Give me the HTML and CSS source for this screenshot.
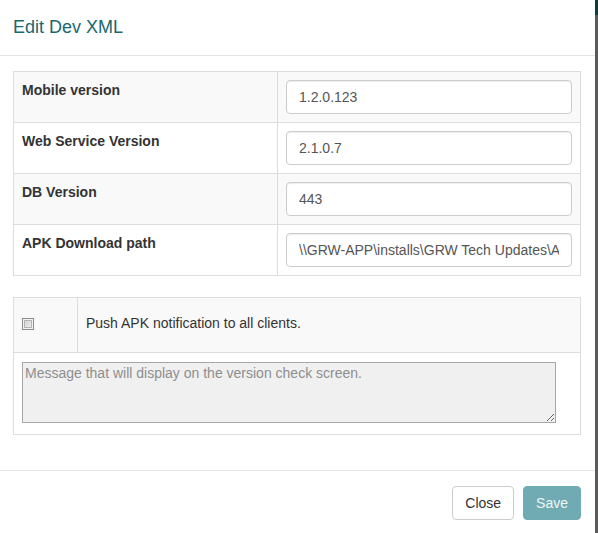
FILE: index.html
```html
<!DOCTYPE html>
<html lang="en">
<head>
    <meta charset="UTF-8">
    <meta name="viewport" content="width=device-width, initial-scale=1.0">
    <title>Edit Dev XML</title>
    <link rel="stylesheet" href="styles.css">
</head>
<body>
    <div class="modal">
        <div class="modal-header">
            <h4 class="modal-title">Edit Dev XML</h4>
        </div>

        <div class="modal-body">
            <table class="table versions">
                <colgroup>
                    <col class="label-col">
                    <col>
                </colgroup>
                <tr class="striped">
                    <td class="label">Mobile version</td>
                    <td><input class="form-control" type="text" value="1.2.0.123"></td>
                </tr>
                <tr>
                    <td class="label">Web Service Version</td>
                    <td><input class="form-control" type="text" value="2.1.0.7"></td>
                </tr>
                <tr class="striped">
                    <td class="label">DB Version</td>
                    <td><input class="form-control" type="text" value="443"></td>
                </tr>
                <tr>
                    <td class="label">APK Download path</td>
                    <td><input class="form-control" type="text" value="\\GRW-APP\installs\GRW Tech Updates\APK\GRW.apk"></td>
                </tr>
            </table>

            <table class="table push">
                <colgroup>
                    <col class="check-col">
                    <col>
                </colgroup>
                <tr class="striped push-row">
                    <td><input class="old-check" type="checkbox"></td>
                    <td>Push APK notification to all clients.</td>
                </tr>
                <tr>
                    <td colspan="2" class="message-cell">
                        <textarea class="message" placeholder="Message that will display on the version check screen."></textarea>
                    </td>
                </tr>
            </table>
        </div>

        <div class="modal-footer">
            <button class="btn btn-default">Close</button>
            <button class="btn btn-primary">Save</button>
        </div>
    </div>
</body>
</html>
```

FILE: styles.css
```css
* {
    margin: 0;
    padding: 0;
    box-sizing: border-box;
}

html, body {
    height: 100%;
}

body {
    font-family: "Liberation Sans", Arial, sans-serif;
    font-size: 14px;
    line-height: 20px;
    color: #333;
    background: linear-gradient(to bottom, #0e3b3c 0, #0e3b3c 15px, #5a5a5a 15px);
}

.modal {
    width: 595px;
    min-height: 100%;
    background: #fff;
}

.modal-header {
    padding: 17px 13px 18px;
    border-bottom: 1px solid #e5e5e5;
}

.modal-title {
    font-size: 18px;
    font-weight: normal;
    line-height: 20px;
    color: #19686f;
}

.modal-body {
    padding: 15px 14px 15px 13px;
}

.table {
    width: 100%;
    border-collapse: collapse;
    table-layout: fixed;
    margin-bottom: 21px;
}

.table td {
    border: 1px solid #ddd;
    padding: 8px;
    vertical-align: top;
}

.table .striped td {
    background: #f9f9f9;
}

.label-col {
    width: 264px;
}

.label {
    font-weight: bold;
}

.form-control {
    display: block;
    width: 100%;
    height: 34px;
    padding: 6px 12px;
    font-family: inherit;
    font-size: 14px;
    color: #555;
    background: #fff;
    border: 1px solid #ccc;
    border-radius: 4px;
    box-shadow: inset 0 1px 1px rgba(0, 0, 0, 0.075);
}

.push {
    margin-bottom: 20px;
}

.check-col {
    width: 64px;
}

.push-row td {
    height: 55px;
    vertical-align: middle;
    padding-top: 6px;
}

.push-row td:last-child {
    padding-top: 0;
    padding-bottom: 4px;
}

.old-check {
    -webkit-appearance: none;
    appearance: none;
    display: block;
    width: 12px;
    height: 12px;
    border: 1px solid #8c8c8c;
    background: linear-gradient(135deg, #c9c9c9, #f6f6f6);
    box-shadow: inset 0 0 0 1px #f2f2f2, inset 0 0 0 2px #b4b4b4;
}

.table .message-cell {
    padding: 9px 8px 11px;
}

.message {
    display: block;
    width: 534px;
    height: 61px;
    padding: 2px;
    font-family: inherit;
    font-size: 14px;
    line-height: 17px;
    color: #333;
    background: #f0f0f0;
    border: 1px solid #a6a6a6;
    border-radius: 0;
}

.message::placeholder {
    color: #8e8e8e;
}

.modal-footer {
    display: flex;
    justify-content: flex-end;
    gap: 9px;
    padding: 15px 14px 15px 13px;
    border-top: 1px solid #e5e5e5;
}

.btn {
    height: 34px;
    padding: 6px 12px;
    font-family: inherit;
    font-size: 14px;
    line-height: 20px;
    border: 1px solid transparent;
    border-radius: 4px;
    cursor: pointer;
}

.btn-default {
    color: #333;
    background: #fff;
    border-color: #ccc;
}

.btn-primary {
    color: #eef6f7;
    background: #70abb3;
    border-color: #70abb3;
}
```
